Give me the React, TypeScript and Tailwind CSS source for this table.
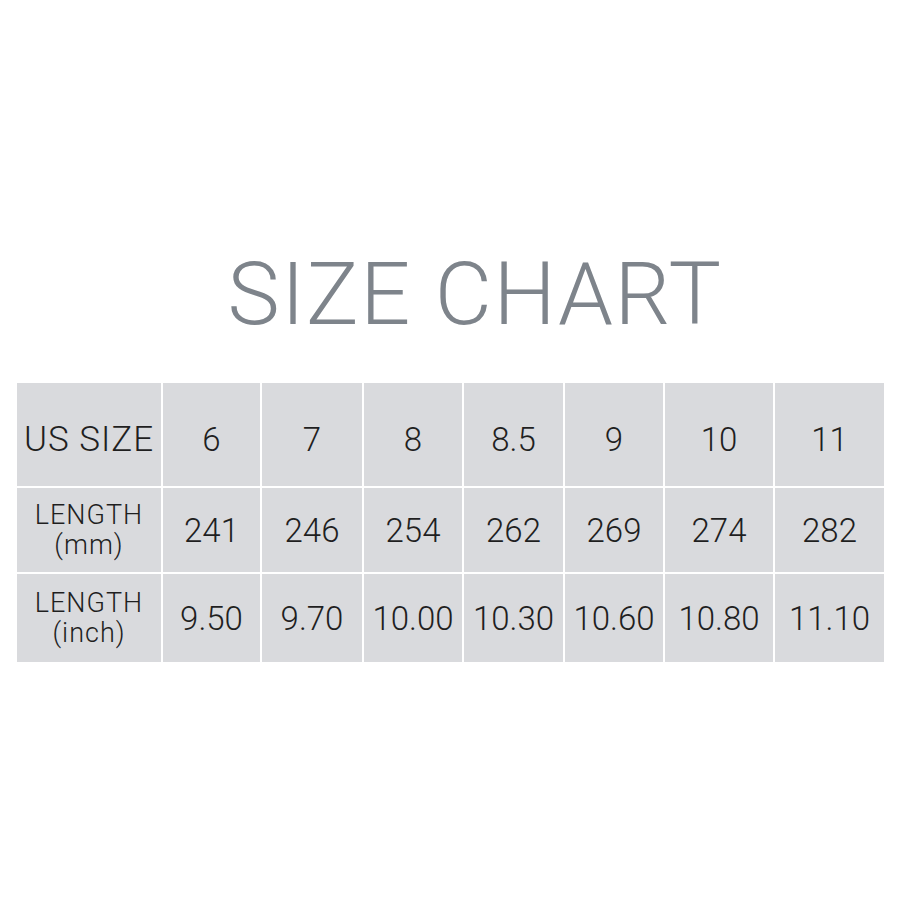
import React from 'react';

const sizes = ['6', '7', '8', '8.5', '9', '10', '11'];
const mm = ['241', '246', '254', '262', '269', '274', '282'];
const inch = ['9.50', '9.70', '10.00', '10.30', '10.60', '10.80', '11.10'];

const Cell: React.FC<{ children: React.ReactNode }> = ({ children }) => (
  <div className="flex items-center justify-center bg-[#d9dadd] text-[33px] leading-none text-[#1f1f1f] whitespace-nowrap">
    {children}
  </div>
);

const RowLabel: React.FC<{ top: string; bottom: string }> = ({ top, bottom }) => (
  <div className="flex flex-col items-center justify-center bg-[#d9dadd] text-[27px] leading-[30px] tracking-[1px] text-[#1f1f1f]">
    <span>{top}</span>
    <span>{bottom}</span>
  </div>
);

export default function App() {
  return (
    <div className="w-[900px] h-[900px] bg-white font-['Roboto',sans-serif] font-light">
      <div className="pt-[250px] pl-[50px] text-center">
        <h1 className="text-[88px] leading-[88px] font-light tracking-[1.5px] text-[#7e848b]">
          SIZE CHART
        </h1>
      </div>

      <div className="mt-[45px] ml-[17px] grid w-[867px] grid-cols-[144px_97px_100px_98px_99px_98px_108px_109px] grid-rows-[103px_84px_88px] gap-[2px] bg-white">
        <div className="flex items-center justify-center whitespace-nowrap bg-[#d9dadd] pt-[10px] text-[35px] leading-none tracking-[1px] text-[#1f1f1f]">
          US SIZE
        </div>
        {sizes.map((s) => (
          <div
            key={s}
            className="flex items-center justify-center bg-[#d9dadd] pt-[10px] text-[33px] leading-none text-[#1f1f1f]"
          >
            {s}
          </div>
        ))}

        <RowLabel top="LENGTH" bottom="(mm)" />
        {mm.map((v) => (
          <Cell key={v}>{v}</Cell>
        ))}

        <RowLabel top="LENGTH" bottom="(inch)" />
        {inch.map((v) => (
          <Cell key={v}>{v}</Cell>
        ))}
      </div>
    </div>
  );
}
